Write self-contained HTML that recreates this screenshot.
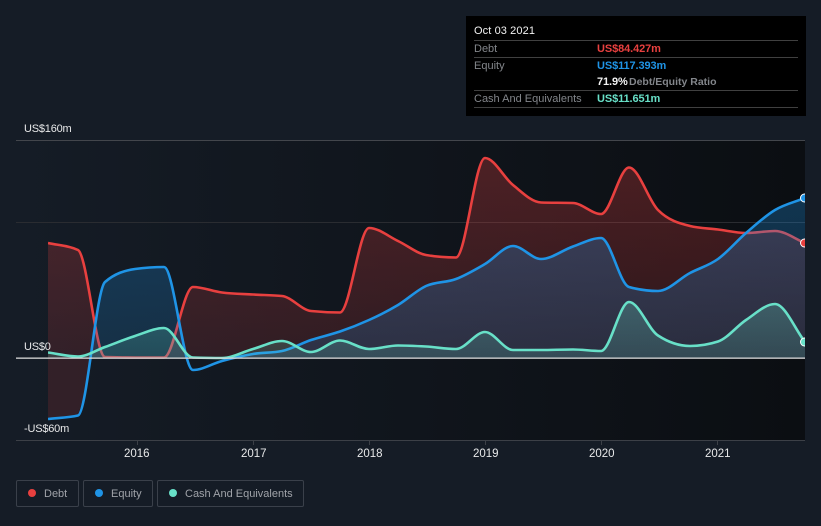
<!DOCTYPE html>
<html><head><meta charset="utf-8"><style>
html,body{margin:0;padding:0;background:#151c26}
body{width:821px;height:526px;overflow:hidden;position:relative;font-family:"Liberation Sans",sans-serif}
svg{position:absolute;left:0;top:0}
.t{position:absolute;font-size:11px;line-height:14px;white-space:nowrap}
.lab{color:#e8e9ea;letter-spacing:-.2px;font-size:11px}
.yr{color:#e8e9ea;font-size:11.5px}
.g{color:#83868b}
.v{font-weight:bold;font-size:11px;letter-spacing:-.1px}
.tip{position:absolute;left:466px;top:16px;width:340px;height:100px;background:#000}
.hl{position:absolute;left:8px;width:324px;height:1px;background:#404040}
.lg{position:absolute;top:480px;height:25px;border:1px solid #3a404a;border-radius:2px;box-sizing:content-box}
.lg i{position:absolute;top:8px;width:8px;height:8px;border-radius:50%}
.lg span{position:absolute;top:6px;font-size:11px;line-height:14px;color:#a0a3a9;white-space:nowrap}
</style></head><body>
<svg width="821" height="526" viewBox="0 0 821 526" id="c">
<defs>
<linearGradient id="bg" x1="0" x2="1" y1="0" y2="0"><stop offset="0" stop-color="#151c26"/><stop offset="1" stop-color="#0b0e12"/></linearGradient>
<linearGradient id="fd" gradientUnits="userSpaceOnUse" x1="0" x2="0" y1="140" y2="358"><stop offset="0" stop-color="#e8403f" stop-opacity=".3"/><stop offset="1" stop-color="#e8403f" stop-opacity=".14"/></linearGradient>
<linearGradient id="fe" gradientUnits="userSpaceOnUse" x1="0" x2="0" y1="190" y2="358"><stop offset="0" stop-color="#1f94e6" stop-opacity=".3"/><stop offset="1" stop-color="#1f94e6" stop-opacity=".17"/></linearGradient>
<linearGradient id="fc" gradientUnits="userSpaceOnUse" x1="0" x2="0" y1="300" y2="358"><stop offset="0" stop-color="#68e0c8" stop-opacity=".26"/><stop offset="1" stop-color="#68e0c8" stop-opacity=".16"/></linearGradient>
<clipPath id="clip"><rect x="48" y="130" width="757" height="320"/></clipPath>
<clipPath id="top"><rect x="48" y="130" width="757" height="228"/></clipPath>
</defs>
<rect x="16" y="141" width="789" height="299" fill="url(#bg)"/>
<rect x="16" y="140" width="789" height="1" fill="#43464c"/>
<rect x="16" y="222" width="789" height="1" fill="#2a2c31"/>
<rect x="16" y="440" width="789" height="1" fill="#3c4047"/>
<rect x="137" y="441" width="1" height="4" fill="#3c4047"/>
<rect x="253" y="441" width="1" height="4" fill="#3c4047"/>
<rect x="369" y="441" width="1" height="4" fill="#3c4047"/>
<rect x="485" y="441" width="1" height="4" fill="#3c4047"/>
<rect x="601" y="441" width="1" height="4" fill="#3c4047"/>
<rect x="717" y="441" width="1" height="4" fill="#3c4047"/>
<g clip-path="url(#clip)" id="plot">
<path d="M48 358L48 419L78 415.5L84 395L90 358Z" fill="#e8403f" fill-opacity=".14"/>
<path id="ad" fill="url(#fd)"/><path id="ld" fill="none" stroke="#e8403f" stroke-width="2.6"/>
<path id="ae" fill="url(#fe)" clip-path="url(#top)"/><path id="le" fill="none" stroke="#1f94e6" stroke-width="2.6"/>
<path id="ac" fill="url(#fc)" clip-path="url(#top)"/><path id="lc" fill="none" stroke="#68e0c8" stroke-width="2.6"/>
<circle cx="804.5" cy="243" r="4" fill="#e8403f" stroke="#fff" stroke-width="1"/>
<circle cx="804.5" cy="198" r="4" fill="#1f94e6" stroke="#fff" stroke-width="1"/>
<circle cx="804.5" cy="342" r="4" fill="#68e0c8" stroke="#fff" stroke-width="1"/>
</g>
<rect x="16" y="357.5" width="789" height="1.3" fill="#d9d9d9"/>
</svg>
<script>
var X=[48,78,105,135,164,193,222,253,282,311,340,369,398,426,456,485,513,541,573,601,629,658,690,718,746,775,805];
var D=[243,250,357,357.5,357.5,287,292.5,294.5,296,311,312.5,228,241,255,257.5,158,185,202.5,203,214,167.5,210,226,229.5,233,231,243];
var E=[419,415.5,282,269,267,370,361,354,351,340,331.5,320,305,286,279,264,246,259,246.5,238,287,291,273,259,233,210,198];
var C=[352.5,356.5,347,336,328,357.5,358,349,341,352,340.5,349,345.5,346.5,349,332,350,350,349.5,351,302,335.5,346,341.5,320,304,342];
function mono(Y){var n=X.length,s=[],m=[],i;
for(i=0;i<n-1;i++)s[i]=(Y[i+1]-Y[i])/(X[i+1]-X[i]);
for(i=1;i<n-1;i++){if(s[i-1]*s[i]<=0){m[i]=0}else{var h0=X[i]-X[i-1],h1=X[i+1]-X[i],p=(s[i-1]*h1+s[i]*h0)/(h0+h1);
m[i]=(s[i-1]<0?-1:1)*Math.min(Math.abs(s[i-1]),Math.abs(s[i]),Math.abs(p)/1)*2;
if(Math.abs(m[i])>Math.abs(p))m[i]=p;}}
m[0]=s[0];m[n-1]=s[n-2];
var d="M"+X[0]+" "+Y[0];
for(i=0;i<n-1;i++){var h=(X[i+1]-X[i])/3;
d+="C"+(X[i]+h).toFixed(1)+" "+(Y[i]+m[i]*h).toFixed(1)+" "+(X[i+1]-h).toFixed(1)+" "+(Y[i+1]-m[i+1]*h).toFixed(1)+" "+X[i+1]+" "+Y[i+1];}
return d;}
function set(k,Y){var d=mono(Y);document.getElementById("l"+k).setAttribute("d",d);
document.getElementById("a"+k).setAttribute("d",d+"L805 358L48 358Z");}
set("d",D);set("e",E);set("c",C);
</script>
<div class="t lab" style="left:24px;top:122px">US$160m</div>
<div class="t lab" style="left:24px;top:340px">US$0</div>
<div class="t lab" style="left:24px;top:422px">-US$60m</div>
<div class="t yr" style="left:124px;top:447px">2016</div>
<div class="t yr" style="left:241px;top:447px">2017</div>
<div class="t yr" style="left:357px;top:447px">2018</div>
<div class="t yr" style="left:473px;top:447px">2019</div>
<div class="t yr" style="left:589px;top:447px">2020</div>
<div class="t yr" style="left:705px;top:447px">2021</div>
<div class="tip">
<div class="t" style="left:8px;top:8px;color:#f2f2f2;letter-spacing:.1px">Oct 03 2021</div>
<div class="hl" style="top:24px"></div>
<div class="t g" style="left:8px;top:26px">Debt</div>
<div class="t v" style="left:131px;top:26px;color:#e8403f">US$84.427m</div>
<div class="hl" style="top:41px"></div>
<div class="t g" style="left:8px;top:43px">Equity</div>
<div class="t v" style="left:131px;top:43px;color:#1f94e6">US$117.393m</div>
<div class="t v" style="left:131px;top:59px;color:#f2f2f2">71.9%</div>
<div class="t g" style="left:163px;top:59px;font-weight:bold;font-size:10.5px">Debt/Equity Ratio</div>
<div class="hl" style="top:74px"></div>
<div class="t g" style="left:8px;top:76px">Cash And Equivalents</div>
<div class="t v" style="left:131px;top:76px;color:#68e0c8">US$11.651m</div>
<div class="hl" style="top:91px"></div>
</div>
<div class="lg" style="left:16px;width:61px"><i style="left:11px;background:#e8403f"></i><span style="left:27px">Debt</span></div>
<div class="lg" style="left:83px;width:68px"><i style="left:11px;background:#1f94e6"></i><span style="left:27px">Equity</span></div>
<div class="lg" style="left:157px;width:145px"><i style="left:11px;background:#68e0c8"></i><span style="left:27px">Cash And Equivalents</span></div>
</body></html>
